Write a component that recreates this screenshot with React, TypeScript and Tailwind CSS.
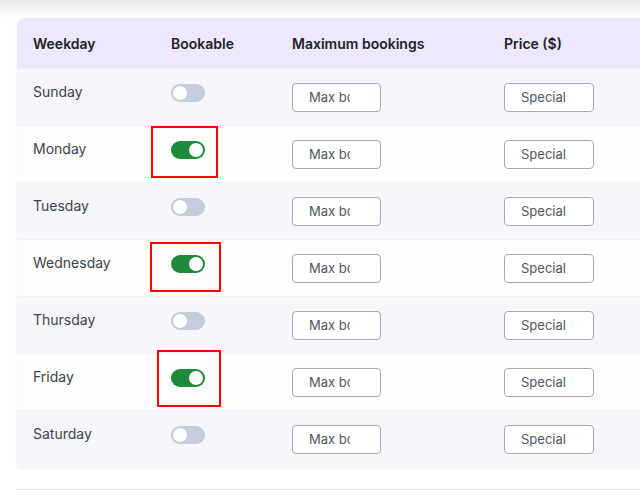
import React from "react";

const days = [
  { name: "Sunday", on: false },
  { name: "Monday", on: true },
  { name: "Tuesday", on: false },
  { name: "Wednesday", on: true },
  { name: "Thursday", on: false },
  { name: "Friday", on: true },
  { name: "Saturday", on: false },
];

// red highlight boxes drawn around the enabled toggles
const marks: Record<string, string> = {
  Monday: "-left-[20px] -right-[13px] -top-[15px] -bottom-[19px]",
  Wednesday: "-left-[21px] -right-[16px] -top-[13px] -bottom-[19px]",
  Friday: "-left-[14px] -right-[16px] -top-[19px] -bottom-[20px]",
};

function Toggle({ on, mark }: { on: boolean; mark?: string }) {
  return (
    <span className="relative inline-flex">
      <span
        className={
          "flex h-[18px] w-[34px] items-center rounded-full px-[2px] " +
          (on ? "justify-end bg-[#1e8a3a]" : "justify-start bg-[#c3cddb]")
        }
      >
        <span className="h-[14px] w-[14px] rounded-full bg-white" />
      </span>
      {mark && (
        <span className={"pointer-events-none absolute border-2 border-[#ff0000] " + mark} />
      )}
    </span>
  );
}

function Field({ placeholder, wide }: { placeholder: string; wide?: boolean }) {
  return (
    <input
      placeholder={placeholder}
      className={
        "h-[29px] rounded-[4px] border border-[#a7aaad] bg-white pl-4 text-[13px] text-[#3c434a] outline-none placeholder:text-[#50575e] " +
        (wide ? "w-[90px] pr-[26px]" : "w-[89px] pr-[30px]")
      }
    />
  );
}

export default function App() {
  return (
    <div
      className="h-[501px] w-[640px] overflow-hidden bg-white text-[#3c434a]"
      style={{ fontFamily: "Inter, 'Noto Sans', sans-serif" }}
    >
      <div className="h-[18px] bg-gradient-to-b from-[#e6e6e6] to-white" />
      <div className="ml-[17px] w-[700px] overflow-hidden rounded-t-lg shadow-[0_2px_3px_rgba(0,0,0,0.06)]">
        <div className="flex h-[50px] items-center bg-[#ede8fd] text-[14px] font-semibold text-[#1d2327]">
          <div className="w-[138px] pl-4">Weekday</div>
          <div className="w-[121px] pl-4">Bookable</div>
          <div className="w-[212px] pl-4">Maximum bookings</div>
          <div className="flex-1 pl-4">Price ($)</div>
        </div>
        {days.map((d, i) => (
          <div
            key={d.name}
            className={
              "flex h-[57px] border-t border-[#f0f0f0] text-[14px] " +
              (i % 2 === 0 ? "bg-[#f7f6fc]" : "bg-[#fdfdfb]")
            }
          >
            <div className="w-[138px] pl-4 pt-[13px] leading-5">{d.name}</div>
            <div className="w-[121px] pl-4 pt-[15px]">
              <Toggle on={d.on} mark={marks[d.name]} />
            </div>
            <div className="flex w-[212px] items-center pl-4">
              <Field placeholder="Max bookings" />
            </div>
            <div className="flex flex-1 items-center pl-4">
              <Field placeholder="Special price" wide />
            </div>
          </div>
        ))}
      </div>
      <div className="ml-[17px] mt-[22px] h-px bg-[#e4e4e4]" />
    </div>
  );
}
